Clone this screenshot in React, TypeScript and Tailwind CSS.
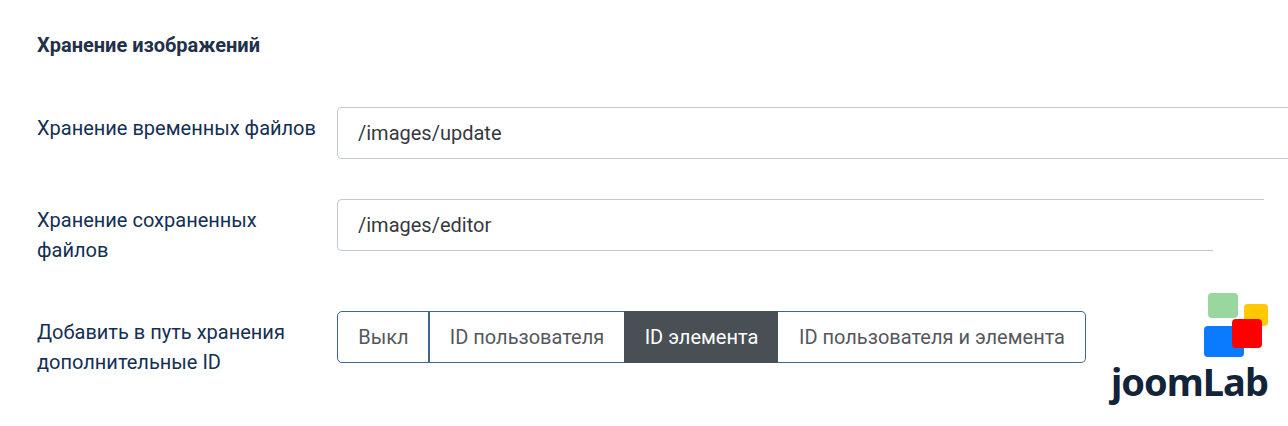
export default function App() {
  return (
    <div className="relative h-[426px] w-[1288px] overflow-hidden bg-white pl-[37px] pt-[33px] font-['Roboto',sans-serif] text-[20px] leading-[30px] text-[#132f53]">
      <h2 className="mb-[46px] h-[28px] text-[20px] font-bold leading-[24px] text-[#22304a]">Хранение изображений</h2>

      <div className="flex h-[51px] items-start">
        <label className="w-[300px] shrink-0 whitespace-nowrap pt-[6px]">Хранение временных файлов</label>
        <div className="flex h-[52px] w-[960px] shrink-0 items-center rounded-l-[5px] border border-r-0 border-[#c0cad8] pl-[20px] text-[#36393d]">/images/update</div>
      </div>

      <div className="mt-[41px] flex h-[60px] items-start">
        <label className="mr-[50px] w-[250px] shrink-0 pt-[6px]">Хранение сохраненных файлов</label>
        <div className="relative flex h-[52px] w-[927px] shrink-0 items-center rounded-l-[5px] border border-r-0 border-[#c0cad8] pl-[20px] text-[#36393d]">
          /images/editor
          <div className="absolute -bottom-px right-0 h-[3px] w-[51px] bg-white" />
        </div>
      </div>

      <div className="mt-[52px] flex items-start">
        <label className="mr-[50px] w-[250px] shrink-0 pt-[6px]">Добавить в путь хранения дополнительные ID</label>
        <div className="flex h-[52px] text-[#54585c]">
          <div className="flex w-[92px] items-center justify-center rounded-l-[5px] border border-[#3f6594] pl-px">Выкл</div>
          <div className="-ml-px flex w-[196px] items-center justify-center border border-l-2 border-r-0 border-[#3f6594]">ID пользователя</div>
          <div className="flex w-[154px] items-center justify-center bg-[#484f55] pl-px text-white">ID элемента</div>
          <div className="flex w-[308px] items-center justify-center rounded-r-[5px] border border-l-0 border-[#3f6594] pl-px">ID пользователя и элемента</div>
        </div>
      </div>

      <div className="absolute left-[1100px] top-[285px] w-[180px]">
        <svg width="180" height="78" viewBox="1100 285 180 78" className="block">
          <rect x="1208" y="293" width="30" height="25" rx="4" fill="#98d89e" />
          <rect x="1244" y="304" width="24" height="22" rx="4" fill="#ffc800" />
          <rect x="1204" y="326" width="40" height="31" rx="4" fill="#0a7bff" />
          <rect x="1232" y="319" width="30" height="29" rx="4" fill="#ff0000" />
        </svg>
        <div className="ml-[11px] -mt-[6px] font-['Noto_Sans',sans-serif] text-[38px] font-bold leading-[48px] tracking-[-1px] text-[#12233a]">joomLab</div>
      </div>
    </div>
  );
}
